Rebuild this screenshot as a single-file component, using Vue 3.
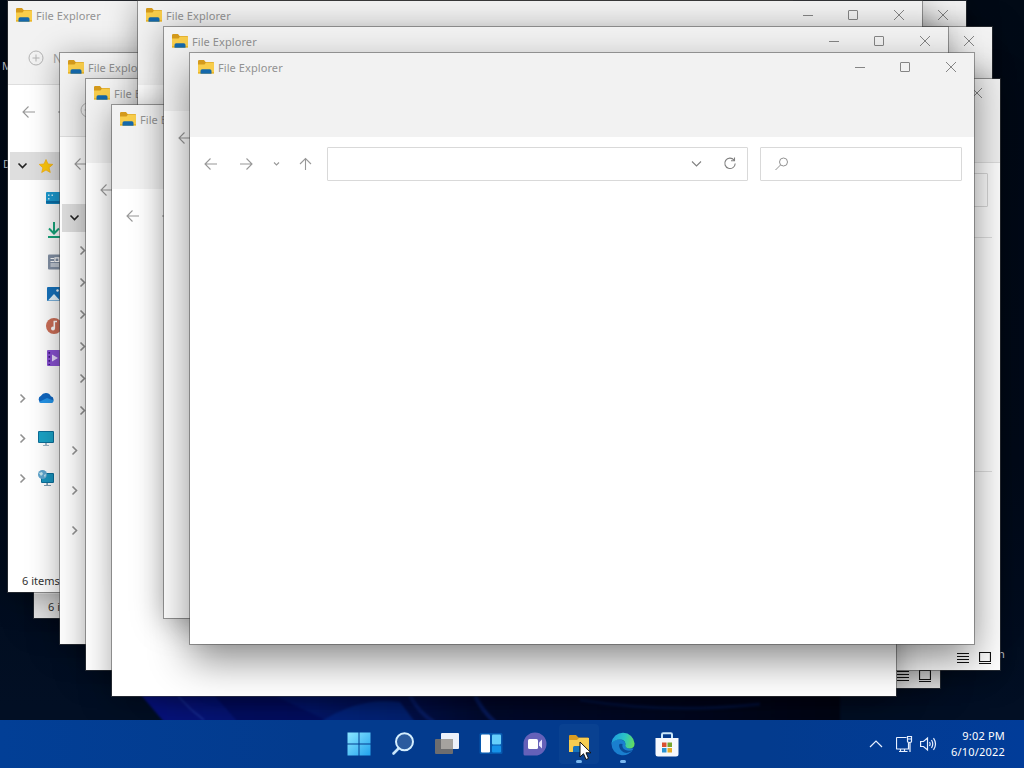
<script setup>
// Windows listed from back to front.
const windows = [
  { id: 'b', x: 34, y: 27, loaded: true, shade: true, status: '6 items' },
  { id: 'a', x: 8, y: 1, loaded: true, nav: 'icons', status: '6 items', title: 'File Explorer' },
  { id: 'r1', x: 182, y: 1, shade: true },
  { id: 'r2', x: 208, y: 27 },
  { id: 'r4', x: 156, y: 97, loaded: true, shade: true, views: true },
  { id: 'r3', x: 216, y: 79, loaded: true, views: true, lines: true },
  { id: 'c', x: 60, y: 53, loaded: true, nav: 'chevrons', title: 'File Explorer' },
  { id: 'd', x: 86, y: 79, title: 'File Explorer' },
  { id: 'f', x: 138, y: 1, title: 'File Explorer' },
  { id: 'e', x: 112, y: 105, title: 'File Explorer' },
  { id: 'g', x: 164, y: 27, title: 'File Explorer' },
  { id: 'h', x: 190, y: 53, front: true, title: 'File Explorer' },
]
const children = ['desktop', 'download', 'document', 'picture', 'music', 'video']
const roots = ['cloud', 'pc', 'network']
const place = (w) => ({ left: w.x + 'px', top: w.y + 'px' })
</script>

<template>
  <div class="desktop">
    <svg class="bloom" width="1024" height="768" viewBox="0 0 1024 768">
      <defs>
        <linearGradient id="bl" x1="0" x2="1">
          <stop offset="0" stop-color="#081280" /><stop offset=".25" stop-color="#04176a" />
          <stop offset=".5" stop-color="#020a2c" /><stop offset="1" stop-color="#010614" />
        </linearGradient>
      </defs>
      <path d="M140 694H840V722H164Z" fill="url(#bl)" />
      <path d="M178 696q12 14 26 24" stroke="#2a49b0" fill="none" />
      <path d="M215 696H275L330 722H238Z" fill="#030c5a" opacity=".7" />
      <path d="M320 722q40 -26 80 -20l15 20z" fill="#043092" opacity=".55" />
      <path d="M410 696q10 18 24 26M475 696q8 16 20 26" stroke="#0c2478" stroke-width="4" fill="none" opacity=".6" />
      <path d="M580 700q90 14 180 4" stroke="#0a1a50" stroke-width="3" fill="none" opacity=".6" />
    </svg>
    <span class="label l1">M</span>
    <span class="label l2">D</span>
    <span class="label l3">n</span>

    <section v-for="w in windows" :key="w.id" class="win" :class="{ front: w.front, shade: w.shade, loaded: w.loaded }" :style="place(w)">
      <header class="titlebar">
        <svg class="folder" width="16" height="16" viewBox="0 0 16 16">
          <path d="M0 2.200Q0 1 1.200 1H6L7.600 3H15Q16 3 16 4V7H0Z" fill="#d49a1c" />
          <path d="M0 5.500H6.500L8 3.600H15.200Q16 3.600 16 4.500V14.500H0Z" fill="#f8cd4b" />
          <path d="M0 13H16V14.500H0Z" fill="#e9b52c" />
          <path d="M2.500 14.800V12Q2.500 10.300 4.200 10.300H11.800Q13.500 10.300 13.500 12V14.800Z" fill="#1468ab" />
        </svg>
        <span v-if="w.title" class="title">{{ w.title }}</span>
        <div class="controls">
          <svg width="46" height="28"><path d="M18 14.500H28" /></svg>
          <svg width="45" height="28"><rect x="17.500" y="9.500" width="9" height="9" rx=".5" /></svg>
          <svg width="46" height="28"><path d="M18 9L28 19M28 9L18 19" /></svg>
        </div>
      </header>
      <div class="commands">
        <template v-if="w.loaded">
          <svg width="16" height="16"><circle cx="8" cy="8" r="7" /><path d="M8 4.500V11.500M4.500 8H11.500" /></svg>
          <span v-if="w.nav">New</span>
        </template>
      </div>
      <div class="toolbar">
        <svg width="36" height="34"><path d="M24 17H12.500M17.500 11.500L12 17L17.500 22.500" /></svg>
        <svg width="34" height="34"><path d="M11 17H22.500M17.500 11.500L23 17L17.500 22.500" /></svg>
        <svg width="28" height="34"><path d="M11 15.500L13.500 18L16 15.500" /></svg>
        <svg width="30" height="34"><path d="M14.500 23V11.500M9 17L14.500 11.500L20 17" /></svg>
        <div class="field address">
          <svg width="34" height="32"><path d="M13 13.500L17.500 18L22 13.500" /></svg>
          <svg width="34" height="32"><path d="M21 12A5.200 5.200 0 1 0 22.200 15.500M21.500 9.500V12.700H18" /></svg>
        </div>
        <div class="field search">
          <svg width="42" height="32"><circle cx="22.500" cy="14" r="4" /><path d="M19.500 17L14.500 22" /></svg>
        </div>
      </div>
      <div class="body">
        <nav v-if="w.nav" :class="w.nav">
          <div class="row head">
            <svg class="chev" width="24" height="16"><path d="M8.500 5.500L12.500 9.500L16.500 5.500" /></svg>
            <svg class="icon" width="16" height="16" viewBox="0 0 16 16"><path d="M8 1.500L10 6L14.800 6.400L11.100 9.700L12.300 14.500L8 12L3.700 14.500L4.900 9.700L1.200 6.400L6 6Z" fill="#fdc70c" stroke="#f5ac05" stroke-linejoin="round" stroke-width=".7" /></svg>
          </div>
          <div v-for="c in children" :key="c" class="row child">
            <svg class="chev right" width="16" height="16"><path d="M6.500 4.500L10.500 8.500L6.500 12.500" /></svg>
            <svg class="icon" width="16" height="16" viewBox="0 0 16 16">
              <g v-if="c === 'desktop'"><rect y="2" width="16" height="12" rx="1" fill="#1d9bd1" /><path d="M0 11H16V13.500H0Z" fill="#0b6fa8" /><path d="M2 4.500H3.500V6H2ZM5.500 4.500H7V6H5.500ZM2 8H3.500V9.500H2Z" fill="#c8effc" /></g>
              <g v-if="c === 'download'" fill="none" stroke="#18a67c" stroke-width="2"><path d="M8 0V11M3 6.500L8 11.500L13 6.500M2 15H14" /></g>
              <g v-if="c === 'document'"><rect x="2" y=".5" width="13" height="15" rx="1" fill="#8391a5" /><path d="M4.500 4.500H8M4.500 7.500H8M9 3.800H13V7.500H9ZM4.500 10H13M4.500 12H13" stroke="#fff" stroke-width="1.200" /></g>
              <g v-if="c === 'picture'"><rect x="1" y="1" width="14" height="14" rx="1" fill="#1673be" /><path d="M2 14.500L8 8L14 14.500Z" fill="#e8f7ff" /><circle cx="11.500" cy="4.500" r="1.200" fill="#fff" /></g>
              <g v-if="c === 'music'"><circle cx="8" cy="8" r="8" fill="#cd6f58" /><circle cx="7" cy="10.500" r="2" fill="#fff" /><path d="M8.300 10.500V3.500H11" stroke="#fff" stroke-width="1.600" fill="none" /></g>
              <g v-if="c === 'video'"><rect x="1" y="0" width="15" height="16" rx="1" fill="#8a52d4" /><path d="M6 4.500V11.500L12 8Z" fill="#eadcff" /><path d="M3.300 2V15" stroke="#3c1380" stroke-width="1.600" stroke-dasharray="1.800 2.200" /></g>
            </svg>
          </div>
          <div v-for="r in roots" :key="r" class="row root">
            <svg class="chev" width="24" height="16"><path d="M10.500 4.500L14.500 8.500L10.500 12.500" /></svg>
            <svg class="icon" width="16" height="16" viewBox="0 0 16 16">
              <g v-if="r === 'cloud'"><path d="M3.500 13A3.800 3.800 0 0 1 3 5.800A5.500 5.500 0 0 1 12.800 6.200A3.500 3.500 0 0 1 13 13Z" fill="#0f66c0" /><path d="M1 12L9 8L15.800 10.500Q15.500 13 13 13H3.500Q2 13 1 12Z" fill="#2494e8" /></g>
              <g v-if="r === 'pc'"><rect y="1" width="16" height="12" rx="1" fill="#0d6f99" /><rect x="1" y="2" width="14" height="10" fill="#1ba3c6" /><path d="M7.300 13H8.700V15H11V15.800H5V15H7.300Z" fill="#7b9bb0" /></g>
              <g v-if="r === 'network'"><rect x="3" y="3" width="13" height="10" rx="1" fill="#0d6f99" /><rect x="4" y="4" width="11" height="8" fill="#1a94bd" /><path d="M8.300 13H10V15H13V16H6V15H8.300Z" fill="#7b9bb0" /><circle cx="4.500" cy="4.500" r="4.500" fill="#5fa4cc" /><path d="M1 3L4 2L5 4L3 6ZM6 5L8 4L7 8Z" fill="#c4e5ee" /></g>
            </svg>
          </div>
        </nav>
        <div v-if="w.lines" class="lines"></div>
      </div>
      <footer v-if="w.loaded" class="status">
        <span>{{ w.status }}</span>
        <div v-if="w.views" class="views">
          <svg width="12" height="12"><path d="M0 1.500H12M0 4.500H12M0 7.500H12M0 10.500H12" /></svg>
          <svg width="12" height="12"><path d="M.5 .5H11.500V9.500H.5ZM0 11.500H12" /></svg>
        </div>
      </footer>
    </section>

    <footer class="taskbar">
      <div class="apps">
        <div class="app"><svg width="24" height="24" viewBox="0 0 24 24"><defs><linearGradient id="wg" x2="1" y2="1"><stop stop-color="#8ce6ff" /><stop offset="1" stop-color="#21a3ee" /></linearGradient></defs><path d="M.5 .5H11.500V11.500H.5ZM12.500 .5H23.500V11.500H12.500ZM.5 12.500H11.500V23.500H.5ZM12.500 12.500H23.500V23.500H12.500Z" fill="url(#wg)" /></svg></div>
        <div class="app"><svg width="24" height="24" viewBox="0 0 24 24"><path d="M7.500 16.500L2.500 21.500" stroke="#c8e5fb" stroke-width="2.600" stroke-linecap="round" /><circle cx="13.500" cy="9.800" r="8.500" fill="#2b5b9e" stroke="#d5eefe" stroke-width="2" /></svg></div>
        <div class="app"><svg width="24" height="24" viewBox="0 0 24 24"><rect x="6" y="1" width="18" height="16" rx="1" fill="#edf1fa" /><rect x="0" y="7" width="18" height="15" rx="1" fill="#6d6d6f" /><path d="M6 7H18V17H6Z" fill="#a5a29f" /></svg></div>
        <div class="app"><svg width="24" height="24" viewBox="0 0 24 24"><rect x=".5" y="1" width="23" height="21" rx="1.500" fill="#0758ae" /><rect x="2" y="2.500" width="9" height="18" rx="1" fill="#fff" /><rect x="13" y="2.500" width="9" height="10" rx="1" fill="#66cffb" /><rect x="13" y="13.500" width="9" height="7" rx="1" fill="#1692e8" /></svg></div>
        <div class="app"><svg width="24" height="24" viewBox="0 0 24 24"><path d="M12 .5A11.500 11.500 0 1 1 12 23.500H2Q.5 23.500 .5 22V12A11.500 11.500 0 0 1 12 .5Z" fill="#6561b9" /><rect x="5" y="7" width="10" height="10" rx="1.500" fill="#fff" /><path d="M16 10.500L19 7.500V16.500L16 13.500Z" fill="#e8e5ff" /></svg></div>
        <div class="app open hover"><svg width="24" height="24" viewBox="0 0 24 24"><path d="M2 4Q2 3 3 3H9L11.500 5.500H21Q22 5.500 22 7V10H2Z" fill="#d99c22" /><path d="M2 8H10L12 6H22V20H2Z" fill="#f6cd51" /><path d="M6 20V15.500Q6 14 7.500 14H16V20Z" fill="#1673bd" /></svg></div>
        <div class="app open">
          <svg width="24" height="24" viewBox="0 0 24 24">
            <defs>
              <linearGradient id="eg" x1="0" y1=".3" x2="1" y2=".5"><stop stop-color="#1d9be0" /><stop offset=".55" stop-color="#2bc4c5" /><stop offset="1" stop-color="#61dc62" /></linearGradient>
            </defs>
            <path d="M.5 12Q3 7 9 7.500Q14 8 14.500 12Q13 16 18.500 16.500H22.500A11.500 11.500 0 0 1 .5 12Z" fill="#1a7fcf" />
            <path d="M.5 11A11.600 11.600 0 0 1 23.600 11.500Q23.500 16.500 18.500 16.500Q13 16 14.500 12Q14 7.500 9 7.500Q3 7.500 .5 12Z" fill="url(#eg)" />
            <path d="M8 13Q8 18 13 20.500Q18 22 22 18Q18 19.500 14.500 18Q10.500 16 11.500 12Q8.500 11 8 13Z" fill="#0a4b98" />
          </svg>
        </div>
        <div class="app"><svg width="24" height="25" viewBox="0 0 24 25"><path d="M7 6V2.500Q7 1.300 8.200 1.300H15.800Q17 1.300 17 2.500V6" fill="none" stroke="#c9e7fb" stroke-width="2" /><path d="M.5 6H23.500V22Q23.500 24.500 21 24.500H3Q.5 24.500 .5 22Z" fill="#f6f8fc" /><path d="M7 10.500H11.500V15H7Z" fill="#d95132" /><path d="M12.500 10.500H17V15H12.500Z" fill="#77a52f" /><path d="M7 16H11.500V20.500H7Z" fill="#2a94d2" /><path d="M12.500 16H17V20.500H12.500Z" fill="#e5ac28" /></svg></div>
      </div>
      <div class="tray">
        <svg width="14" height="16"><path d="M1 11L7 5L13 11" /></svg>
        <svg width="17" height="17"><path d="M10.500 1.500H1Q.5 1.500 .5 2V12.500Q.5 13 1 13H12.500V7M4.500 13V15.500M8.500 13V15.500M3 15.500H11.500M11.500 .5H15.500V5.500Q15.500 6.500 13.500 6.500Q11.500 6.500 11.500 5.500ZM11.500 3H15.500M14 6.500V16" /></svg>
        <svg width="17" height="16"><path d="M.6 5.500H3.500L7.500 2V14L3.500 10.500H.6ZM9.500 6Q10.800 8 9.500 10M11.500 4Q14 8 11.500 12M13.500 2.200Q17.500 8 13.500 13.800" /></svg>
        <div class="clock"><span>9:02 PM</span><span>6/10/2022</span></div>
      </div>
    </footer>
    <svg class="cursor" width="13" height="20" viewBox="0 0 13 20"><path d="M1 1V16L4.500 12.700L7 18.500L9.500 17.400L7 11.800H12Z" fill="#fff" stroke="#111" stroke-width="1" /></svg>
  </div>
</template>

<style>
body { margin: 0; overflow: hidden; }
</style>

<style scoped>
.desktop { position: relative; width: 1024px; height: 768px; overflow: hidden; background: linear-gradient(180deg, #010a16, #010b1a 60%, #020f24 92%); font-family: "Noto Sans", "Open Sans", sans-serif; font-size: 11px; }
svg { display: block; flex: none; fill: none; }
.bloom { position: absolute; left: 0; top: 0; filter: blur(1px); }
.label { position: absolute; color: #ccd2dc; font-size: 11px; line-height: 16px; }
.l1 { left: 2px; top: 58px; }
.l2 { left: 3px; top: 156px; }
.l3 { left: 998px; top: 646px; }
.win { position: absolute; width: 784px; height: 591px; display: flex; flex-direction: column; background: #fff; box-shadow: 0 0 0 1px rgba(70, 70, 70, .5), 0 4px 30px rgba(0, 0, 0, .36); }
.win.front { box-shadow: 0 0 0 1px rgba(70, 70, 70, .5), 0 16px 38px rgba(0, 0, 0, .46); }
.titlebar { height: 28px; display: flex; align-items: center; background: #f2f2f2; padding-left: 8px; }
.title { margin-left: 4px; color: #929292; font-size: 11px; letter-spacing: .08px; line-height: 16px; padding-top: 2px; }
.controls { margin-left: auto; display: flex; }
.controls svg { stroke: #858585; }
.commands { height: 56px; box-sizing: border-box; background: #f2f2f2; display: flex; align-items: center; padding: 3px 0 0 20px; gap: 9px; color: #a4a4a4; font-size: 12px; }
.commands svg { stroke: #b4b4b4; }
.loaded .commands { border-bottom: 1px solid #dedede; }
.toolbar { height: 54px; box-sizing: border-box; display: flex; align-items: center; padding: 0 12px 0 3px; }
.toolbar > svg { stroke: #989898; stroke-width: 1.1; }
.field { box-sizing: border-box; height: 34px; border: 1px solid #d9d9d9; display: flex; align-items: center; border-radius: 1px; }
.field svg { stroke: #808080; stroke-width: 1.1; }
.address { flex: 1; margin-left: 6px; justify-content: flex-end; }
.search { width: 202px; margin-left: 12px; }
.search svg { stroke: #929292; stroke-width: 1; }
.body { flex: 1; min-height: 0; }
nav { padding: 13px 0 0 2px; width: 180px; }
.row { display: flex; align-items: center; }
.chev { stroke: #919191; stroke-width: 1.6; }
.head { height: 28px; margin-bottom: 2px; background: #dedede; }
.head .chev { stroke: #222; }
.head .icon, .root .icon { margin-left: 4px; }
.child { height: 32px; padding-left: 12px; }
.child .icon { margin-left: 8px; }
.icons .child .chev { visibility: hidden; }
.child + .root { margin-top: 4px; }
.root { height: 40px; }
.lines { height: 233px; margin: 20px 8px 0; border: solid #e0e0e0; border-width: 1px 0; }
.status { height: 24px; display: flex; align-items: center; padding: 0 9px 0 14px; color: #333; }
.shade .status { background: #e8e8e8; }
.views { margin-left: auto; display: flex; gap: 10px; }
.views svg { stroke: #111; stroke-width: 1.2; }
.taskbar { position: absolute; left: 0; right: 0; bottom: 0; height: 48px; background: linear-gradient(90deg, #023f96, #033b8e 30%, #033b8e 75%, #013c99); display: flex; align-items: center; }
.apps { display: flex; margin-left: 336.500px; }
.app { position: relative; width: 44px; height: 48px; display: flex; align-items: center; justify-content: center; }
.open::after { content: ""; position: absolute; left: 19px; bottom: 5px; width: 6px; height: 3px; border-radius: 2px; background: #79b7f0; }
.hover::before { content: ""; position: absolute; inset: 4px 2px; border-radius: 4px; background: rgba(50, 100, 170, .15); }
.hover svg { position: relative; }
.tray { margin-left: auto; display: flex; align-items: center; padding-right: 19px; }
.tray svg { stroke: #e8f0ff; stroke-width: 1.2; }
.tray svg + svg { margin-left: 13px; }
.tray svg + svg + svg { margin-left: 7px; }
.clock { display: flex; flex-direction: column; width: 68px; text-align: right; color: #fff; font-size: 11px; letter-spacing: .2px; line-height: 16px; }
.cursor { position: absolute; left: 579px; top: 741px; }
</style>
